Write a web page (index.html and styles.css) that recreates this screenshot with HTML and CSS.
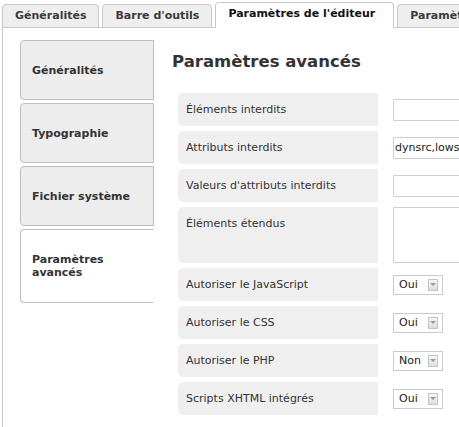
FILE: index.html
```html
<!DOCTYPE html>
<html lang="fr">
<head>
<meta charset="utf-8">
<title>Paramètres avancés</title>
<link rel="stylesheet" href="styles.css">
</head>
<body>
<div class="page">
  <div class="tabs">
    <div class="tab">Généralités</div>
    <div class="tab">Barre d'outils</div>
    <div class="tab active">Paramètres de l'éditeur</div>
    <div class="tab">Paramètres</div>
  </div>
  <div class="panel">
    <div class="sidetabs">
      <div class="stab">Généralités</div>
      <div class="stab">Typographie</div>
      <div class="stab">Fichier système</div>
      <div class="stab active">Paramètres<br>avancés</div>
    </div>
    <div class="content">
      <h2 class="title">Paramètres avancés</h2>
      <div class="rows">
        <div class="row"><div class="label">Éléments interdits</div><div class="field"><input class="text" type="text" value=""></div></div>
        <div class="row"><div class="label">Attributs interdits</div><div class="field"><input class="text" type="text" value="dynsrc,lowsrc"></div></div>
        <div class="row"><div class="label">Valeurs d'attributs interdits</div><div class="field"><input class="text" type="text" value=""></div></div>
        <div class="row tall"><div class="label">Éléments étendus</div><div class="field"><textarea class="area"></textarea></div></div>
        <div class="row"><div class="label">Autoriser le JavaScript</div><div class="field"><div class="select"><span class="val">Oui</span><span class="btn"></span></div></div></div>
        <div class="row"><div class="label">Autoriser le CSS</div><div class="field"><div class="select"><span class="val">Oui</span><span class="btn"></span></div></div></div>
        <div class="row"><div class="label">Autoriser le PHP</div><div class="field"><div class="select"><span class="val">Non</span><span class="btn"></span></div></div></div>
        <div class="row"><div class="label">Scripts XHTML intégrés</div><div class="field"><div class="select"><span class="val">Oui</span><span class="btn"></span></div></div></div>
      </div>
    </div>
  </div>
</div>
</body>
</html>
```
FILE: styles.css
```css
html, body {
  margin: 0;
  padding: 0;
  height: 100%;
  overflow: hidden;
  background: #fff;
}
body {
  font-family: "DejaVu Sans", Verdana, sans-serif;
  font-size: 11px;
  color: #333;
}
.page {
  padding: 2px 0 0 2px;
  width: 700px;
}
.tabs {
  display: flex;
  align-items: flex-end;
  gap: 3px;
  position: relative;
  z-index: 1;
  margin-bottom: -1px;
}
.tab {
  height: 22px;
  line-height: 22px;
  padding: 0 12px 0 12px;
  border: 1px solid #c8c8c8;
  border-radius: 4px 4px 0 0;
  background: #eeeeee;
  font-weight: bold;
  color: #3a3a3a;
  white-space: nowrap;
}
.tab.active {
  height: 24px;
  background: #fff;
  border-bottom-color: #fff;
  color: #111;
  padding: 0 18px 0 12px;
  line-height: 22px;
}
.panel {
  display: flex;
  align-items: flex-start;
  border-left: 1px solid #c8c8c8;
  border-top: 1px solid #c8c8c8;
  min-height: 420px;
}
.sidetabs {
  display: flex;
  flex-direction: column;
  gap: 3px;
  margin: 12px 0 0 17px;
  width: 134px;
}
.stab {
  height: 60px;
  box-sizing: border-box;
  display: flex;
  align-items: center;
  padding-left: 11px;
  border: 1px solid #bdbdbd;
  border-radius: 4px 0 0 4px;
  background: #ededed;
  font-weight: bold;
  color: #333;
  line-height: 13px;
}
.stab.active {
  height: 74px;
  background: #fff;
  border-right-color: #fff;
}
.content {
  margin-left: 18px;
  padding-top: 24px;
}
.title {
  margin: 0 0 21px 0;
  font-size: 16.5px;
  line-height: 20px;
  font-weight: bold;
  color: #333;
}
.rows {
  display: flex;
  flex-direction: column;
  gap: 5px;
  margin-left: 6px;
}
.row {
  display: flex;
  gap: 15px;
  height: 33px;
}
.row.tall {
  height: 56px;
}
.label {
  width: 200px;
  box-sizing: border-box;
  padding: 10px 8px;
  line-height: 13px;
  background: #efefef;
  border-radius: 5px 0 0 5px;
  color: #333;
  white-space: nowrap;
}
.field {
  display: flex;
  align-items: center;
}
.text {
  box-sizing: border-box;
  width: 150px;
  height: 22px;
  margin: 0;
  padding: 0 1px;
  border: 1px solid #cdcdcd;
  border-radius: 1px;
  font-family: "DejaVu Sans", Verdana, sans-serif;
  font-size: 11px;
  color: #222;
  background: #fff;
}
.area {
  box-sizing: border-box;
  width: 150px;
  height: 56px;
  margin: 0;
  border: 1px solid #cdcdcd;
  border-radius: 1px;
  resize: none;
  background: #fff;
}
.select {
  box-sizing: border-box;
  width: 50px;
  height: 20px;
  display: flex;
  align-items: center;
  justify-content: space-between;
  padding: 0 4px 0 5px;
  border: 1px solid #cacaca;
  background: #fff;
  color: #222;
}
.val {
  line-height: 13px;
}
.btn {
  box-sizing: border-box;
  width: 10px;
  height: 12px;
  border: 1px solid #c4c4c4;
  background: linear-gradient(#f6f6f6, #dedede);
  display: flex;
  align-items: center;
  justify-content: center;
}
.btn::after {
  content: "";
  width: 0;
  height: 0;
  border-left: 3px solid transparent;
  border-right: 3px solid transparent;
  border-top: 3px solid #999;
}
```
